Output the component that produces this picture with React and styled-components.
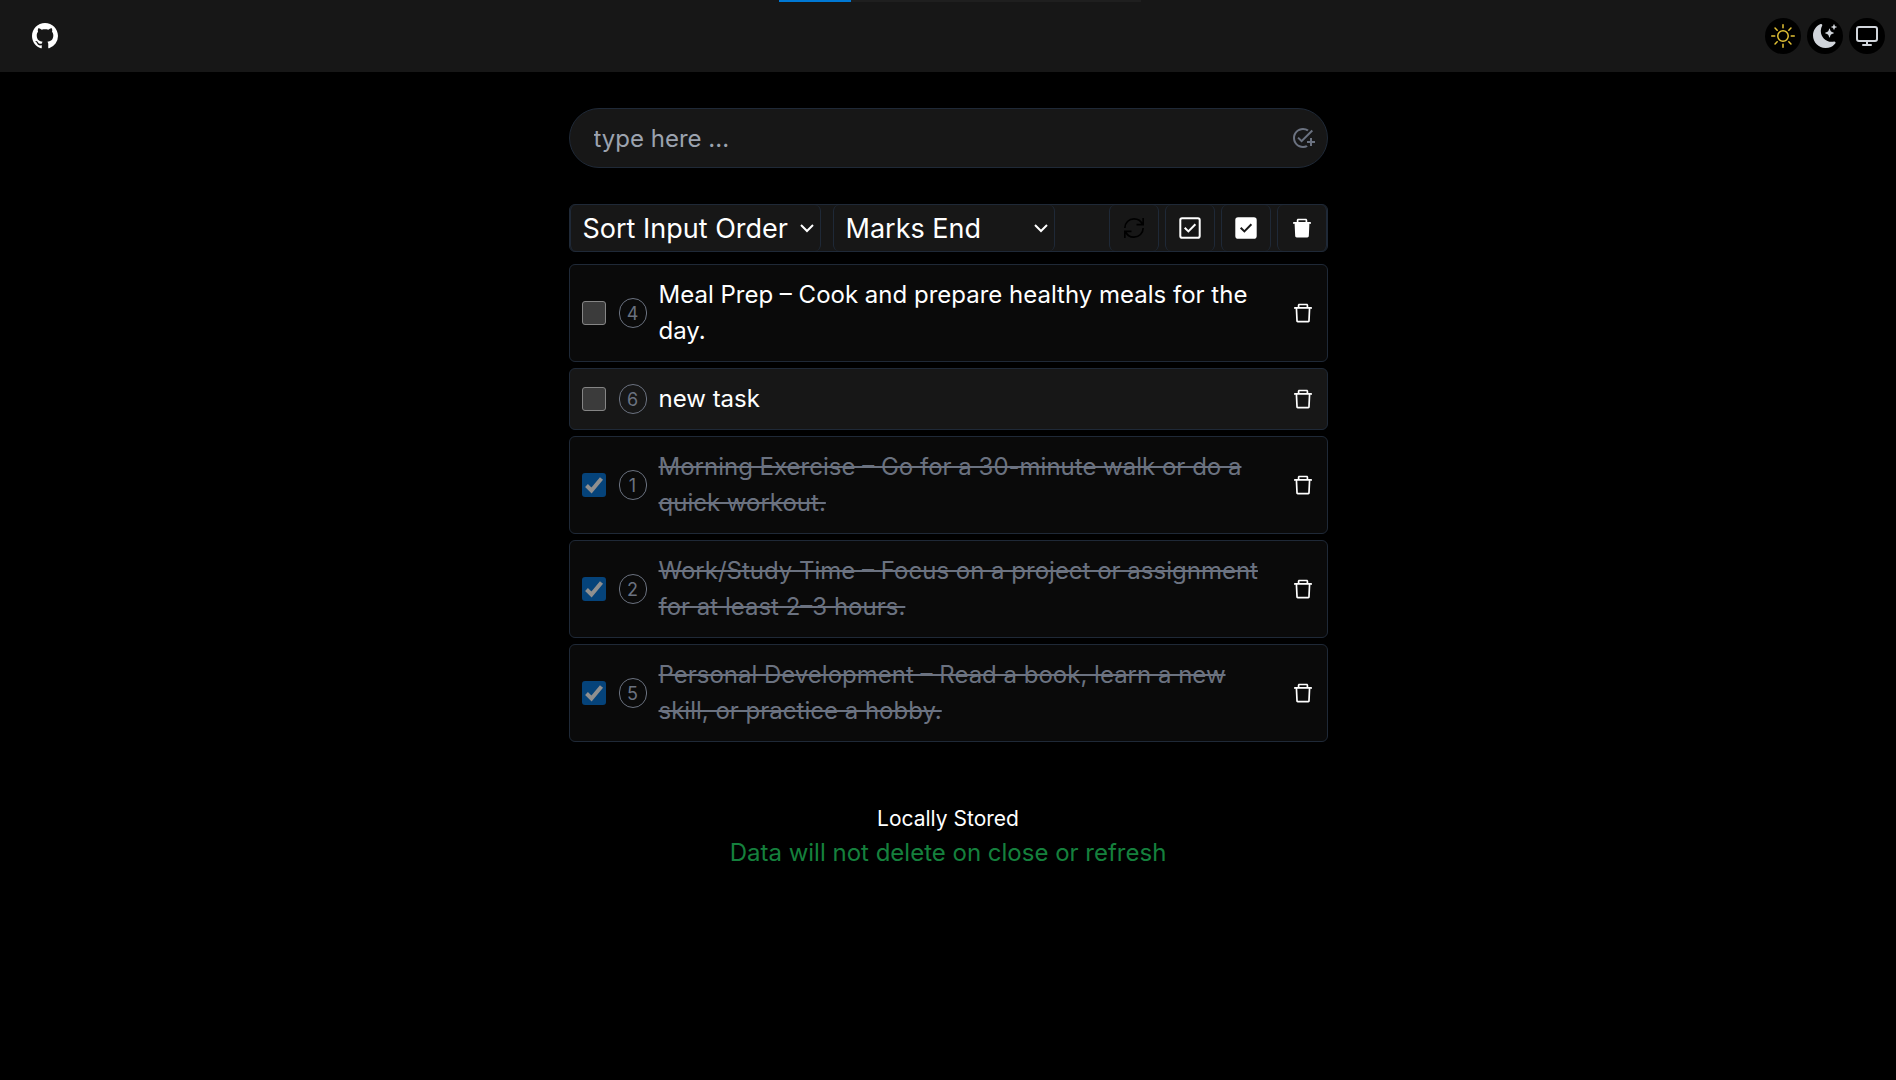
import React, { useState } from "react";
import styled, { createGlobalStyle } from "styled-components";
import { BsGithub, BsMoonStarsFill, BsSun } from "react-icons/bs";
import { FiMonitor } from "react-icons/fi";
import { MdAddTask } from "react-icons/md";
import { AiOutlineDelete, AiFillDelete } from "react-icons/ai";
import { GrUpdate } from "react-icons/gr";

const line = "#1f2937";
const muted = "#6b7280";

const GlobalStyle = createGlobalStyle`
  *, *::before, *::after { box-sizing: border-box; }
  html { color-scheme: dark; }
  body {
    margin: 0;
    background: #000;
    color: #fff;
    font: 400 24px/36px Inter, "Noto Sans", sans-serif;
  }
  button, input, select { font: inherit; color: inherit; margin: 0; }
  svg { display: block; }
`;

const Progress = styled.progress`
  appearance: none;
  position: absolute;
  top: 0;
  left: 50%;
  width: 362px;
  height: 2px;
  margin-left: -169px;
  border: 0;
  &::-webkit-progress-bar { background: #1f1f1f; }
  &::-webkit-progress-value { background: #0078d4; }
`;

const Header = styled.header`
  display: flex;
  align-items: center;
  justify-content: space-between;
  height: 72px;
  padding: 0 11px 0 32px;
  background: #171717;
`;

const HomeLink = styled.a`
  color: #fff;
  font-size: 26px;
`;

const Themes = styled.nav`
  display: flex;
  gap: 6px;
`;

const ThemeButton = styled.button`
  display: grid;
  place-items: center;
  width: 36px;
  height: 36px;
  padding: 0;
  border: 0;
  border-radius: 50%;
  background: #000;
  color: ${(p) => p.$color || "#d1d5db"};
  font-size: 24px;
`;

const Main = styled.main`
  display: flex;
  flex-direction: column;
  width: 90%;
  max-width: 759px;
  margin: 36px auto 0;
`;

const Entry = styled.form`
  display: flex;
  align-items: center;
  height: 60px;
  padding: 0 12px 0 24px;
  border: 1px solid ${line};
  border-radius: 30px;
  background: #171717;
`;

const EntryInput = styled.input`
  flex: 1;
  min-width: 0;
  padding: 2px 0 0;
  border: 0;
  outline: 0;
  background: none;
  &::placeholder { color: #9ca3af; }
`;

const AddButton = styled.button`
  padding: 0;
  border: 0;
  background: none;
  color: ${muted};
`;

const Toolbar = styled.div`
  display: flex;
  gap: 12px;
  height: 48px;
  margin-top: 36px;
  border: 1px solid ${line};
  border-radius: 6px;
  background: #171717;
`;

const Picker = styled.div`
  display: flex;
  align-items: center;
  position: relative;
  width: ${(p) => p.$width};
  border: solid ${line};
  border-width: 0 1px;
  border-radius: 6px;
  font-size: 27px;
  svg {
    position: absolute;
    right: 5px;
    pointer-events: none;
  }
`;

const Select = styled.select`
  appearance: none;
  width: 100%;
  height: 46px;
  padding: 2px 0 0 12px;
  border: 0;
  background: none;
`;

const Tools = styled.div`
  display: flex;
  gap: 6px;
  margin-left: auto;
`;

const ToolButton = styled.button`
  display: grid;
  place-items: center;
  width: 50px;
  padding: 0;
  border: solid ${line};
  border-width: 0 1px;
  border-radius: 6px;
  background: none;
  color: ${(p) => p.$color || "#fff"};
  font-size: ${(p) => p.$size || "24px"};
`;

const List = styled.ul`
  display: flex;
  flex-direction: column;
  gap: 6px;
  margin: 12px 0 0;
  padding: 0;
  list-style: none;
`;

const Item = styled.li`
  display: flex;
  align-items: center;
  gap: 12px;
  padding: 12px;
  border: 1px solid ${line};
  border-radius: 6px;
  background: ${(p) => (p.$shaded ? "#171717" : "#0a0a0a")};
`;

const Tick = styled.span`
  display: grid;
  flex: none;
  width: 25px;
  height: 24px;
  > * { grid-area: 1 / 1; }
  input {
    appearance: none;
    width: 24px;
    height: 24px;
    border: 1px solid #858585;
    border-radius: 3px;
    background: #3b3b3b;
  }
  input:checked {
    border: 0;
    background: #05437a;
  }
  svg {
    pointer-events: none;
    visibility: hidden;
  }
  input:checked + svg { visibility: visible; }
`;

const Index = styled.span`
  display: grid;
  flex: none;
  place-items: center;
  width: 28px;
  height: 30px;
  border: 1px solid ${muted};
  border-radius: 15px;
  color: ${muted};
  font-size: 18px;
  line-height: 27px;
`;

const Label = styled.label`
  flex: 1;
  color: ${(p) => (p.$done ? muted : "#fff")};
  text-decoration: ${(p) => (p.$done ? "line-through" : "none")};
`;

const DeleteButton = styled.button`
  flex: none;
  padding: 0;
  border: 0;
  background: none;
`;

const Footer = styled.footer`
  display: flex;
  flex-direction: column;
  align-items: center;
  margin-top: 60px;
`;

const Note = styled.p`
  margin: 0;
  color: ${(p) => p.$color};
  font-size: ${(p) => p.$size};
  line-height: 34px;
`;

const initialTasks = [
  { id: 4, text: "Meal Prep – Cook and prepare healthy meals for the day.", done: false },
  { id: 6, text: "new task", done: false },
  { id: 1, text: "Morning Exercise – Go for a 30-minute walk or do a quick workout.", done: true },
  { id: 2, text: "Work/Study Time – Focus on a project or assignment for at least 2–3 hours.", done: true },
  { id: 5, text: "Personal Development – Read a book, learn a new skill, or practice a hobby.", done: true },
];

function Chevron() {
  return (
    <svg width="16" height="16" viewBox="0 0 16 16" fill="none" stroke="#fff" strokeWidth="2">
      <path d="M2 5l6 6 6-6" />
    </svg>
  );
}

function BoxIcon({ filled }) {
  return (
    <svg width="22" height="22" viewBox="0 0 22 22" fill="none" strokeWidth="2">
      <rect x="1.3" y="1.3" width="19.400" height="19.400" rx="1.8" stroke="#fff" fill={filled ? "#fff" : "none"} />
      <path d="M5.700 10.700l3.700 3.700 7-7.200" stroke={filled ? "#171717" : "#fff"} />
    </svg>
  );
}

export default function App() {
  const [tasks, setTasks] = useState(initialTasks);
  const toggle = (id) =>
    setTasks(tasks.map((t) => (t.id === id ? { ...t, done: !t.done } : t)));
  const remove = (id) => setTasks(tasks.filter((t) => t.id !== id));
  const markAll = (done) => setTasks(tasks.map((t) => ({ ...t, done })));

  return (
    <>
      <GlobalStyle />
      <Header>
        <HomeLink href="#github" aria-label="GitHub"><BsGithub /></HomeLink>
        <Themes>
          <ThemeButton aria-label="Light" $color="#e2c135"><BsSun /></ThemeButton>
          <ThemeButton aria-label="Dark"><BsMoonStarsFill /></ThemeButton>
          <ThemeButton aria-label="System"><FiMonitor /></ThemeButton>
        </Themes>
        <Progress aria-label="Loading" value="20" max="100" />
      </Header>
      <Main>
        <Entry onSubmit={(e) => e.preventDefault()}>
          <EntryInput aria-label="New task" placeholder="type here ..." />
          <AddButton aria-label="Add task"><MdAddTask /></AddButton>
        </Entry>
        <Toolbar>
          <Picker $width="251px">
            <Select aria-label="Sort"><option>Sort Input Order</option></Select>
            <Chevron />
          </Picker>
          <Picker $width="222px">
            <Select aria-label="Marks"><option>Marks End</option></Select>
            <Chevron />
          </Picker>
          <Tools>
            <ToolButton aria-label="Reset" $color="#000" $size="20px"><GrUpdate /></ToolButton>
            <ToolButton aria-label="Unmark all" onClick={() => markAll(false)}><BoxIcon /></ToolButton>
            <ToolButton aria-label="Mark all" onClick={() => markAll(true)}><BoxIcon filled /></ToolButton>
            <ToolButton aria-label="Delete all" onClick={() => setTasks([])}><AiFillDelete /></ToolButton>
          </Tools>
        </Toolbar>
        <List>
          {tasks.map((t) => (
            <Item key={t.id} $shaded={t.id === 6}>
              <Tick>
                <input id={"task-" + t.id} type="checkbox" checked={t.done} onChange={() => toggle(t.id)} />
                <svg width="24" height="24" viewBox="0 0 24 24" fill="none" stroke="#8f8f8f" strokeWidth="4">
                  <path d="M4.500 12.500l5 5L19.500 5.500" />
                </svg>
              </Tick>
              <Index>{t.id}</Index>
              <Label htmlFor={"task-" + t.id} $done={t.done}>{t.text}</Label>
              <DeleteButton aria-label="Delete" onClick={() => remove(t.id)}><AiOutlineDelete /></DeleteButton>
            </Item>
          ))}
        </List>
        <Footer>
          <Note $color="#fff" $size="21px">Locally Stored</Note>
          <Note $color="#15803d" $size="24px">Data will not delete on close or refresh</Note>
        </Footer>
      </Main>
    </>
  );
}
